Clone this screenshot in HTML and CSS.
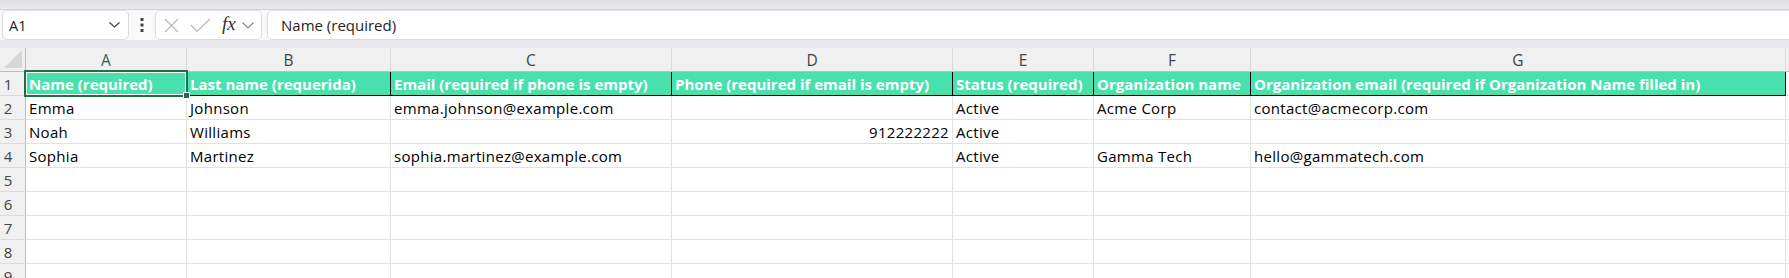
FILE: index.html
```html
<!DOCTYPE html>
<html>
<head>
  <title>Contacts import</title>
  <link rel="stylesheet" href="styles.css">
</head>
<body>
  <div class="titlebar"></div>

  <div class="formula-bar">
    <div class="name-box">
      <span>A1</span>
      <svg width="11" height="6" viewBox="0 0 11 6"><polyline points="0.5,0.5 5.5,5 10.5,0.5" fill="none" stroke="#444" stroke-width="1.2"/></svg>
    </div>
    <div class="more">
      <svg width="4" height="14" viewBox="0 0 4 14"><rect x="0.5" y="0" width="3" height="3" fill="#444"/><rect x="0.5" y="5.5" width="3" height="3" fill="#444"/><rect x="0.5" y="11" width="3" height="3" fill="#444"/></svg>
    </div>
    <div class="fx-box">
      <svg width="15" height="15" viewBox="0 0 15 15"><path d="M1 1 L14 14 M14 1 L1 14" stroke="#b8b8b8" stroke-width="1.2" fill="none"/></svg>
      <svg width="21" height="15" viewBox="0 0 21 15"><polyline points="1,7 7,13.5 20,1" stroke="#b8b8b8" stroke-width="1.2" fill="none"/></svg>
      <span class="fx">fx</span>
      <svg width="12" height="7" viewBox="0 0 12 7"><polyline points="0.5,0.5 6,6 11.5,0.5" fill="none" stroke="#888" stroke-width="1.1"/></svg>
    </div>
    <div class="formula-input">Name (required)</div>
  </div>

  <div class="divider"></div>

  <div class="sheet">
    <!-- column headers -->
    <div class="corner"><svg width="18" height="18" viewBox="0 0 18 18"><polygon points="0,18 18,18 18,0" fill="#d7d7d7"/></svg></div>
    <div class="col-head current">A</div>
    <div class="col-head">B</div>
    <div class="col-head">C</div>
    <div class="col-head">D</div>
    <div class="col-head">E</div>
    <div class="col-head">F</div>
    <div class="col-head">G</div>
    <div class="col-head blank"></div>

    <!-- row 1 -->
    <div class="row-head">1</div>
    <div class="cell hdr selected">Name (required)<span class="handle"></span></div>
    <div class="cell hdr">Last name (requerida)</div>
    <div class="cell hdr">Email (required if phone is empty)</div>
    <div class="cell hdr">Phone (required if email is empty)</div>
    <div class="cell hdr">Status (required)</div>
    <div class="cell hdr">Organization name</div>
    <div class="cell hdr">Organization email (required if Organization Name filled in)</div>
    <div class="cell"></div>

    <!-- row 2 -->
    <div class="row-head">2</div>
    <div class="cell">Emma</div>
    <div class="cell">Johnson</div>
    <div class="cell">emma.johnson@example.com</div>
    <div class="cell"></div>
    <div class="cell">Active</div>
    <div class="cell">Acme Corp</div>
    <div class="cell">contact@acmecorp.com</div>
    <div class="cell"></div>

    <!-- row 3 -->
    <div class="row-head">3</div>
    <div class="cell">Noah</div>
    <div class="cell">Williams</div>
    <div class="cell"></div>
    <div class="cell num">912222222</div>
    <div class="cell">Active</div>
    <div class="cell"></div>
    <div class="cell"></div>
    <div class="cell"></div>

    <!-- row 4 -->
    <div class="row-head">4</div>
    <div class="cell">Sophia</div>
    <div class="cell">Martinez</div>
    <div class="cell">sophia.martinez@example.com</div>
    <div class="cell"></div>
    <div class="cell">Active</div>
    <div class="cell">Gamma Tech</div>
    <div class="cell">hello@gammatech.com</div>
    <div class="cell"></div>

    <!-- empty rows -->
    <div class="row-head">5</div>
    <div class="cell"></div><div class="cell"></div><div class="cell"></div><div class="cell"></div>
    <div class="cell"></div><div class="cell"></div><div class="cell"></div><div class="cell"></div>

    <div class="row-head">6</div>
    <div class="cell"></div><div class="cell"></div><div class="cell"></div><div class="cell"></div>
    <div class="cell"></div><div class="cell"></div><div class="cell"></div><div class="cell"></div>

    <div class="row-head">7</div>
    <div class="cell"></div><div class="cell"></div><div class="cell"></div><div class="cell"></div>
    <div class="cell"></div><div class="cell"></div><div class="cell"></div><div class="cell"></div>

    <div class="row-head">8</div>
    <div class="cell"></div><div class="cell"></div><div class="cell"></div><div class="cell"></div>
    <div class="cell"></div><div class="cell"></div><div class="cell"></div><div class="cell"></div>

    <div class="row-head">9</div>
    <div class="cell"></div><div class="cell"></div><div class="cell"></div><div class="cell"></div>
    <div class="cell"></div><div class="cell"></div><div class="cell"></div><div class="cell"></div>
  </div>
</body>
</html>
```

FILE: styles.css
```css
body {
  margin: 0;
  background: #fff;
  font-family: "Open Sans", "Liberation Sans", sans-serif;
  color: #000;
  overflow: hidden;
}
.titlebar {
  height: 9px;
  background: linear-gradient(#dfdfe3, #e9e9ec);
  border-bottom: 1px solid #d3d3d7;
}
.formula-bar {
  display: flex;
  height: 30px;
  background: #f9f9f9;
}
.name-box {
  margin-left: 2px;
  width: 127px;
  box-sizing: border-box;
  border: 1px solid #dcdcdc;
  border-radius: 5px;
  background: #fff;
  display: flex;
  align-items: center;
  justify-content: space-between;
  padding: 0 8px 0 6px;
  font-size: 14.5px;
  color: #242424;
}
.more {
  width: 26px;
  display: flex;
  align-items: center;
  justify-content: center;
}
.fx-box {
  width: 107px;
  box-sizing: border-box;
  border: 1px solid #dcdcdc;
  border-radius: 5px;
  background: #fff;
  display: flex;
  align-items: center;
  padding: 0 3px 0 8px;
}
.fx-box svg:first-child {
  margin-right: 11px;
}
.fx {
  font-family: "Liberation Serif", serif;
  font-style: italic;
  font-size: 19px;
  color: #333;
  margin: -3px 6px 0 11px;
}
.formula-input {
  flex: 1;
  margin-left: 5px;
  margin-right: -10px;
  box-sizing: border-box;
  border: 1px solid #dcdcdc;
  border-radius: 5px;
  background: #fff;
  display: flex;
  align-items: center;
  padding-left: 13px;
  font-size: 15px;
  color: #242424;
}
.divider {
  height: 8px;
  background: #e9e9ed;
}

/* grid */
.sheet {
  display: grid;
  grid-template-columns: 26px 161px 204px 281px 281px 141px 157px 535px 1fr;
  grid-auto-rows: 24px;
}
.sheet > div {
  box-sizing: border-box;
  white-space: nowrap;
}
.corner {
  background: #f0f0f0;
  border-right: 1px solid #bdbdbd;
  border-bottom: 1px solid #bdbdbd;
  display: flex;
  align-items: flex-end;
  justify-content: flex-end;
  padding: 0 3px 3px 0;
}
.col-head {
  background: #f0f0f0;
  border-right: 1px solid #dadada;
  border-bottom: 1px solid #bdbdbd;
  display: flex;
  align-items: center;
  justify-content: center;
  font-size: 15.5px;
  color: #444;
}
.col-head.current {
  color: #2d6550;
}
.col-head.blank {
  border-right: none;
}
.row-head {
  background: #f0f0f0;
  border-right: 1px solid #bdbdbd;
  border-bottom: 1px solid #dcdcdc;
  display: flex;
  align-items: flex-end;
  justify-content: center;
  padding: 0 9px 1px 0;
  line-height: 20px;
  font-size: 15px;
  color: #444;
}
.cell {
  border-right: 1px solid #e1e1e1;
  border-bottom: 1px solid #e1e1e1;
  display: flex;
  align-items: flex-end;
  padding: 0 3px 1px 3px;
  line-height: 20px;
  font-size: 15px;
  letter-spacing: 0.3px;
}
.cell.num {
  justify-content: flex-end;
}
.cell.hdr {
  background: #48e1ae;
  color: #fff;
  font-weight: 700;
  font-size: 15px;
  letter-spacing: 0;
  border-right: 1px solid #000;
  border-bottom: 1px solid #000;
}
.cell.selected {
  position: relative;
}
.cell.selected::after {
  content: "";
  position: absolute;
  top: -2px;
  left: -2px;
  right: -2px;
  bottom: -2px;
  border: 2px solid #1f7145;
  box-shadow: inset 0 0 0 1px #fff;
}
.handle {
  position: absolute;
  right: -4px;
  bottom: -4px;
  width: 5px;
  height: 5px;
  background: #1f7145;
  border: 1px solid #fff;
  z-index: 1;
}
```
